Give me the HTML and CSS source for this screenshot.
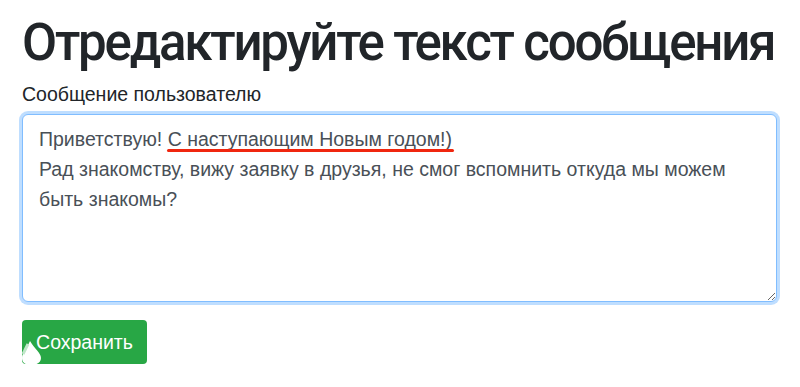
FILE: index.html
```html
<!DOCTYPE html>
<html lang="ru">
<head>
    <meta charset="UTF-8">
    <meta name="viewport" content="width=device-width, initial-scale=1.0">
    <title>Редактирование сообщения</title>
    <link rel="stylesheet" href="styles.css">
</head>
<body>
    <div class="container">
        <h1>Отредактируйте текст сообщения</h1>
        <form id="messageForm">
            <label for="messageText" class="labelInput">Сообщение пользователю</label>
            <div class="textBox">
                <textarea id="messageText" class="textareaUser" rows="6">Приветствую! С наступающим Новым годом!)
Рад знакомству, вижу заявку в друзья, не смог вспомнить откуда мы можем быть знакомы?</textarea>
                <div class="mark"></div>
            </div>
            <div class="buttonBox">
                <button type="submit" class="saveButton">Сохранить</button>
                <svg class="drop" width="20" height="25" viewBox="0 0 20 25">
                    <path d="M8 1 C5 8 0 13 0 18 C0 23 4 25 9 25 C14 25 19 23 19 18 C19 13 12 8 8 1 Z" fill="#fff"/>
                    <path d="M6 4 L1 14" stroke="#bfe6c8" stroke-width="3"/>
                </svg>
            </div>
        </form>
    </div>
</body>
</html>
```

FILE: styles.css
```css
body {
    font-family: "Liberation Sans", Arial, sans-serif;
    background-color: #fff;
    color: #212529;
    margin: 0;
    padding: 0;
}

.container {
    padding: 12px 23px 0 22px;
}

h1 {
    font-family: Roboto, "Liberation Sans", sans-serif;
    font-weight: 500;
    font-size: 51px;
    letter-spacing: -2.2px;
    line-height: 1.2;
    white-space: nowrap;
    margin: 0 0 8px;
}

.labelInput {
    display: block;
    font-size: 19.5px;
    line-height: 27px;
    margin-bottom: 6px;
}

.textBox {
    position: relative;
}

.textareaUser {
    display: block;
    width: 100%;
    height: 188px;
    box-sizing: border-box;
    padding: 9px 16px;
    font-family: "Liberation Sans", Arial, sans-serif;
    font-size: 19.5px;
    line-height: 30px;
    color: #495057;
    border: 1px solid #80bdff;
    border-radius: 6px;
    box-shadow: 0 0 0 3px rgba(0, 123, 255, 0.25);
    outline: none;
}

.mark {
    position: absolute;
    left: 145px;
    top: 35px;
    width: 287px;
    height: 3px;
    border-radius: 2px;
    background-color: #f0260f;
}

.buttonBox {
    position: relative;
    margin-top: 18px;
    width: 125px;
}

.saveButton {
    display: block;
    width: 125px;
    height: 44px;
    padding: 0 12px;
    font-family: "Liberation Sans", Arial, sans-serif;
    font-size: 19.5px;
    color: #fff;
    background-color: #28a745;
    border: none;
    border-radius: 4px;
    cursor: pointer;
}

.drop {
    position: absolute;
    left: 0;
    top: 20px;
}
```
